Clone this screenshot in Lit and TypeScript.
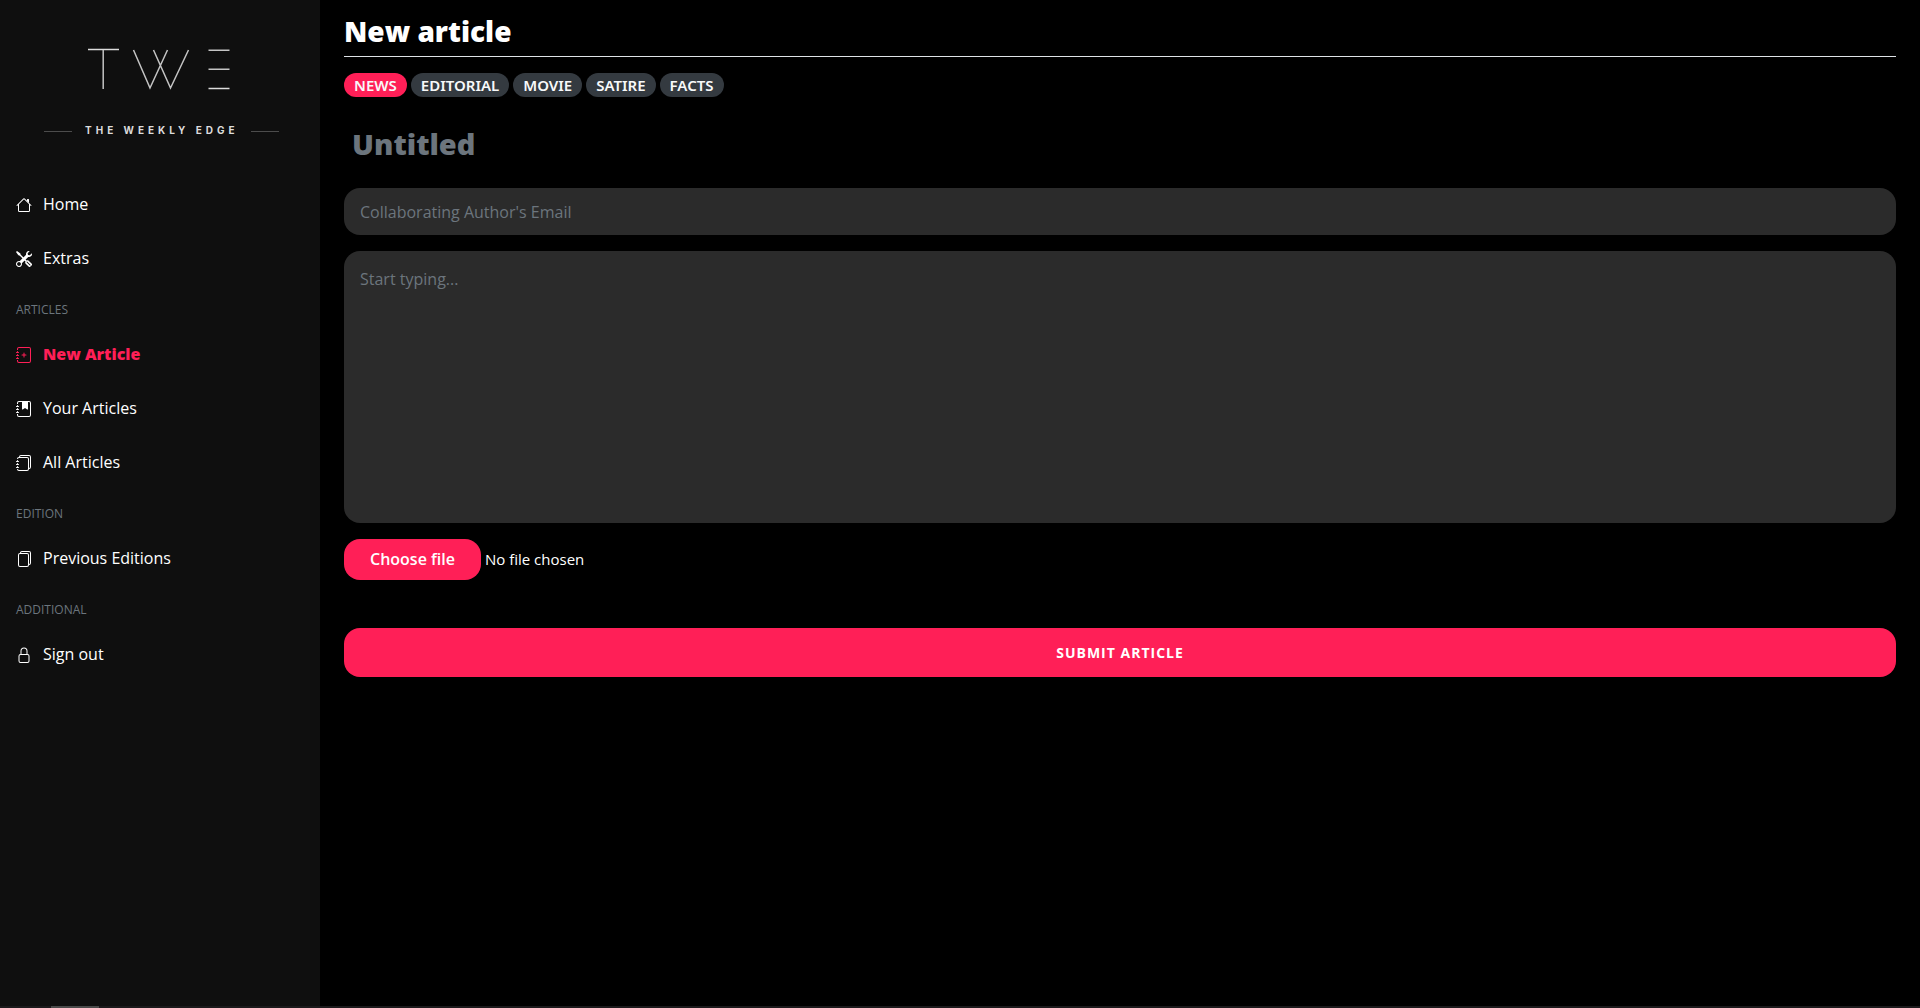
import { LitElement, html, css, svg } from "lit";
import { customElement, property, state } from "lit/decorators.js";

const icons = {
  house: svg`<path fill-rule="evenodd" d="M2 13.5V7h1v6.5a.5.5 0 0 0 .5.5h9a.5.5 0 0 0 .5-.5V7h1v6.5a1.5 1.5 0 0 1-1.5 1.5h-9A1.5 1.5 0 0 1 2 13.5zm11-11V6l-2-2V2.5a.5.5 0 0 1 .5-.5h1a.5.5 0 0 1 .5.5z"/><path fill-rule="evenodd" d="M7.293 1.5a1 1 0 0 1 1.414 0l6.647 6.646a.5.5 0 0 1-.708.708L8 2.207 1.354 8.854a.5.5 0 1 1-.708-.708L7.293 1.5z"/>`,
  tools: svg`<path fill-rule="evenodd" d="M0 1l1-1 3.081 2.2a1 1 0 0 1 .419.815v.07a1 1 0 0 0 .293.708L10.5 9.5l.914-.305a1 1 0 0 1 1.023.242l3.356 3.356a1 1 0 0 1 0 1.414l-1.586 1.586a1 1 0 0 1-1.414 0l-3.356-3.356a1 1 0 0 1-.242-1.023L9.5 10.5 3.793 4.793a1 1 0 0 0-.707-.293h-.071a1 1 0 0 1-.814-.419L0 1zm11.354 9.646a.5.5 0 0 0-.708.708l3 3a.5.5 0 0 0 .708-.708l-3-3z"/><path fill-rule="evenodd" d="M15.898 2.223a3.003 3.003 0 0 1-3.679 3.674L5.878 12.15a3 3 0 1 1-2.027-2.027l6.252-6.341A3 3 0 0 1 13.778.1l-2.142 2.142L12 4l1.757.364 2.141-2.141zm-13.37 9.019L3.001 11l.471.242.529.026.287.445.445.287.026.529L5 13l-.242.471-.026.529-.445.287-.287.445-.529.026L3 15l-.471-.242L2 14.732l-.287-.445L1.268 14l-.026-.529L1 13l.242-.471.026-.529.445-.287.287-.445.529-.026z"/>`,
  journalPlus: svg`<path d="M3 0h10a2 2 0 0 1 2 2v12a2 2 0 0 1-2 2H3a2 2 0 0 1-2-2v-1h1v1a1 1 0 0 0 1 1h10a1 1 0 0 0 1-1V2a1 1 0 0 0-1-1H3a1 1 0 0 0-1 1v1H1V2a2 2 0 0 1 2-2z"/><path d="M1 5v-.5a.5.5 0 0 1 1 0V5h.5a.5.5 0 0 1 0 1h-2a.5.5 0 0 1 0-1H1zm0 3v-.5a.5.5 0 0 1 1 0V8h.5a.5.5 0 0 1 0 1h-2a.5.5 0 0 1 0-1H1zm0 3v-.5a.5.5 0 0 1 1 0v.5h.5a.5.5 0 0 1 0 1h-2a.5.5 0 0 1 0-1H1z"/><path d="M8 5.5a.5.5 0 0 1 .5.5v1.5H10a.5.5 0 0 1 0 1H8.500V10a.5.5 0 0 1-1 0V8.500H6a.5.5 0 0 1 0-1h1.500V6a.5.5 0 0 1 .5-.5z"/>`,
  journalBookmark: svg`<path d="M3 0h10a2 2 0 0 1 2 2v12a2 2 0 0 1-2 2H3a2 2 0 0 1-2-2v-1h1v1a1 1 0 0 0 1 1h10a1 1 0 0 0 1-1V2a1 1 0 0 0-1-1H3a1 1 0 0 0-1 1v1H1V2a2 2 0 0 1 2-2z"/><path d="M1 5v-.5a.5.5 0 0 1 1 0V5h.5a.5.5 0 0 1 0 1h-2a.5.5 0 0 1 0-1H1zm0 3v-.5a.5.5 0 0 1 1 0V8h.5a.5.5 0 0 1 0 1h-2a.5.5 0 0 1 0-1H1zm0 3v-.5a.5.5 0 0 1 1 0v.5h.5a.5.5 0 0 1 0 1h-2a.5.5 0 0 1 0-1H1z"/><path d="M6 1h6v7a.5.5 0 0 1-.757.429L9 7.083 6.757 8.430A.5.5 0 0 1 6 8V1z"/>`,
  journals: svg`<path d="M5 0h8a2 2 0 0 1 2 2v10a2 2 0 0 1-2 2 2 2 0 0 1-2 2H3a2 2 0 0 1-2-2h1a1 1 0 0 0 1 1h8a1 1 0 0 0 1-1V4a1 1 0 0 0-1-1H3a1 1 0 0 0-1 1H1a2 2 0 0 1 2-2h8a2 2 0 0 1 2 2v9a1 1 0 0 0 1-1V2a1 1 0 0 0-1-1H5a1 1 0 0 0-1 1H3a2 2 0 0 1 2-2z"/><path d="M1 6v-.5a.5.5 0 0 1 1 0V6h.5a.5.5 0 0 1 0 1h-2a.5.5 0 0 1 0-1H1zm0 3v-.5a.5.5 0 0 1 1 0V9h.5a.5.5 0 0 1 0 1h-2a.5.5 0 0 1 0-1H1zm0 2.500v.5H.5a.5.5 0 0 0 0 1h2a.5.5 0 0 0 0-1H2v-.5a.5.5 0 0 0-1 0z"/>`,
  files: svg`<path d="M13 0H6a2 2 0 0 0-2 2 2 2 0 0 0-2 2v10a2 2 0 0 0 2 2h7a2 2 0 0 0 2-2 2 2 0 0 0 2-2V2a2 2 0 0 0-2-2zm0 13V4a2 2 0 0 0-2-2H5a1 1 0 0 1 1-1h7a1 1 0 0 1 1 1v10a1 1 0 0 1-1 1zM3 4a1 1 0 0 1 1-1h7a1 1 0 0 1 1 1v10a1 1 0 0 1-1 1H4a1 1 0 0 1-1-1V4z"/>`,
  lock: svg`<path fill-rule="evenodd" d="M11.500 8h-7a1 1 0 0 0-1 1v5a1 1 0 0 0 1 1h7a1 1 0 0 0 1-1V9a1 1 0 0 0-1-1zm-7-1a2 2 0 0 0-2 2v5a2 2 0 0 0 2 2h7a2 2 0 0 0 2-2V9a2 2 0 0 0-2-2h-7zm0-3a3.500 3.500 0 1 1 7 0v3h-1V4a2.500 2.500 0 0 0-5 0v3h-1V4z"/>`,
};
type IconName = keyof typeof icons;

interface NavItem { label: string; icon: IconName; active?: boolean }
interface NavGroup { heading?: string; items: NavItem[] }

const groups: NavGroup[] = [
  { items: [{ label: "Home", icon: "house" }, { label: "Extras", icon: "tools" }] },
  {
    heading: "Articles",
    items: [
      { label: "New Article", icon: "journalPlus", active: true },
      { label: "Your Articles", icon: "journalBookmark" },
      { label: "All Articles", icon: "journals" },
    ],
  },
  { heading: "Edition", items: [{ label: "Previous Editions", icon: "files" }] },
  { heading: "Additional", items: [{ label: "Sign out", icon: "lock" }] },
];

const categories = ["News", "Editorial", "Movie", "Satire", "Facts"];

@customElement("twe-icon")
class TweIcon extends LitElement {
  static styles = css`
    :host { display: block; width: 16px; height: 16px; }
    .icon { display: block; }
  `;
  @property() name: IconName = "house";
  render() {
    return html`<svg class="icon" width="16" height="16" viewBox="0 0 16 16" fill="currentColor" aria-hidden="true">${icons[this.name]}</svg>`;
  }
}

@customElement("twe-sidebar")
class TweSidebar extends LitElement {
  static styles = css`
    :host { display: block; background: #0f0f0f; color: #fff; }
    .brand { display: block; padding: 32px 0 0 32px; color: #fff; }
    .logo { display: block; }
    .mark { fill: none; stroke: #c4c4c4; stroke-width: 1.5; }
    .mark-strong { stroke: #dcdcdc; }
    .dash { stroke: #4c4c4c; stroke-width: 1; }
    .name { fill: #dcdcdc; font: 700 10px "Inter", sans-serif; letter-spacing: 4px; }
    .nav { padding-top: 34px; }
    .list { list-style: none; margin: 0; padding: 0; }
    .link {
      display: flex;
      align-items: center;
      gap: 11px;
      padding: 14px 16px 16px;
      color: #fff;
      text-decoration: none;
      font-size: 16px;
      line-height: 24px;
    }
    .glyph { margin-top: 2px; }
    .active { color: #ff1f57; font-weight: 800; }
    .heading {
      margin: 0;
      padding: 15px 16px 9px;
      color: #6c757d;
      font-size: 12px;
      font-weight: 400;
      line-height: 18px;
      text-transform: uppercase;
    }
  `;
  render() {
    return html`
      <a class="brand" href="#" aria-label="The Weekly Edge">
        <svg class="logo" width="260" height="112" viewBox="32 32 260 112">
          <g class="mark">
            <path class="mark-strong" d="M88 49.500H119" />
            <path d="M103.200 50V89" />
            <path d="M133.500 50L150 88L167.500 50M153.500 50L170.500 88L188.500 50" />
            <path d="M208.500 50.200H229.500M208.500 69.200H229.500" />
            <path class="mark-strong" d="M208.500 88.500H229.500" />
            <path class="dash" d="M44 131.500H72M251 131.500H279" />
          </g>
          <text class="name" x="85" y="134">THE WEEKLY EDGE</text>
        </svg>
      </a>
      <nav class="nav">
        ${groups.map(
          (g) => html`
            ${g.heading ? html`<h2 class="heading">${g.heading}</h2>` : ""}
            <ul class="list">
              ${g.items.map(
                (i) => html`<li>
                  <a class="link ${i.active ? "active" : ""}" href="#"><twe-icon class="glyph" .name=${i.icon}></twe-icon>${i.label}</a>
                </li>`
              )}
            </ul>
          `
        )}
      </nav>
    `;
  }
}

@customElement("twe-editor")
class TweEditor extends LitElement {
  static styles = css`
    :host { display: block; padding: 11px 24px 24px; color: #fff; }
    * { box-sizing: border-box; }
    .title {
      margin: 0 0 16px;
      padding-bottom: 5px;
      border-bottom: 1px solid #dee2e6;
      font-size: 28px;
      font-weight: 800;
      line-height: 40px;
    }
    .form { display: flex; flex-direction: column; gap: 16px; }
    .tags { display: flex; flex-wrap: wrap; gap: 4px; }
    .tag {
      border: 0;
      border-radius: 12px;
      padding: 0 10px;
      background: #343a40;
      color: #f8f9fa;
      font: 600 15px/24px "Noto Sans", sans-serif;
      text-transform: uppercase;
    }
    .tag.on { background: #ff1f57; }
    .field {
      display: block;
      width: 100%;
      margin: 0;
      border: 0;
      border-radius: 16px;
      padding: 13px 16px 11px;
      background: #2b2b2b;
      color: #fff;
      font: 400 16px/23px "Open Sans", sans-serif;
      resize: none;
      outline: none;
    }
    .field::placeholder { color: #6c757d; opacity: 1; }
    .headline {
      border-radius: 0;
      padding: 9px 8px 7px;
      background: none;
      font-size: 29px;
      font-weight: 800;
      line-height: 43px;
    }
    .body { height: 272px; padding: 16px; line-height: 24px; }
    .upload { display: flex; align-items: center; gap: 4px; margin-bottom: 32px; }
    .choose {
      border-radius: 16px;
      padding: 0 26px;
      background: #ff1f57;
      font-size: 16px;
      font-weight: 600;
      line-height: 41px;
      cursor: pointer;
    }
    .file { position: absolute; width: 1px; height: 1px; opacity: 0; }
    .filename { padding-bottom: 2px; font-size: 15px; line-height: 24px; }
    .submit {
      border: 0;
      border-radius: 16px;
      padding: 0 16px;
      background: #ff1f57;
      color: #fff;
      font: 700 14px/49px "Open Sans", sans-serif;
      letter-spacing: 1px;
      text-transform: uppercase;
    }
  `;
  @state() category = "News";
  @state() fileName = "No file chosen";

  onFile(e: Event) {
    this.fileName = (e.target as HTMLInputElement).files?.[0]?.name ?? "No file chosen";
  }

  render() {
    return html`
      <h1 class="title">New article</h1>
      <form class="form" @submit=${(e: Event) => e.preventDefault()}>
        <div class="tags">
          ${categories.map(
            (c) => html`<button type="button" class="tag ${c === this.category ? "on" : ""}"
              aria-pressed=${c === this.category} @click=${() => (this.category = c)}>${c}</button>`
          )}
        </div>
        <input class="field headline" type="text" aria-label="Title" placeholder="Untitled" />
        <input class="field" type="email" aria-label="Collaborating Author's Email" placeholder="Collaborating Author's Email" />
        <textarea class="field body" aria-label="Article text" placeholder="Start typing..."></textarea>
        <div class="upload">
          <input class="file" id="file" type="file" @change=${this.onFile} />
          <label class="choose" for="file">Choose file</label>
          <span class="filename">${this.fileName}</span>
        </div>
        <button class="submit" type="submit">Submit article</button>
      </form>
    `;
  }
}

@customElement("app-root")
class AppRoot extends LitElement {
  static styles = css`
    :host {
      display: flex;
      flex-direction: column;
      min-height: 100vh;
      background: #000;
      font-family: "Open Sans", sans-serif;
    }
    .page { flex: 1; display: grid; grid-template-columns: 1fr 5fr; }
    .edge { height: 2px; padding-left: 51px; background: #1c1a1c; }
    .grip { width: 48px; height: 2px; background: #4a4a4a; }
  `;
  render() {
    return html`
      <div class="page">
        <twe-sidebar></twe-sidebar>
        <twe-editor></twe-editor>
      </div>
      <div class="edge"><div class="grip"></div></div>
    `;
  }
}
